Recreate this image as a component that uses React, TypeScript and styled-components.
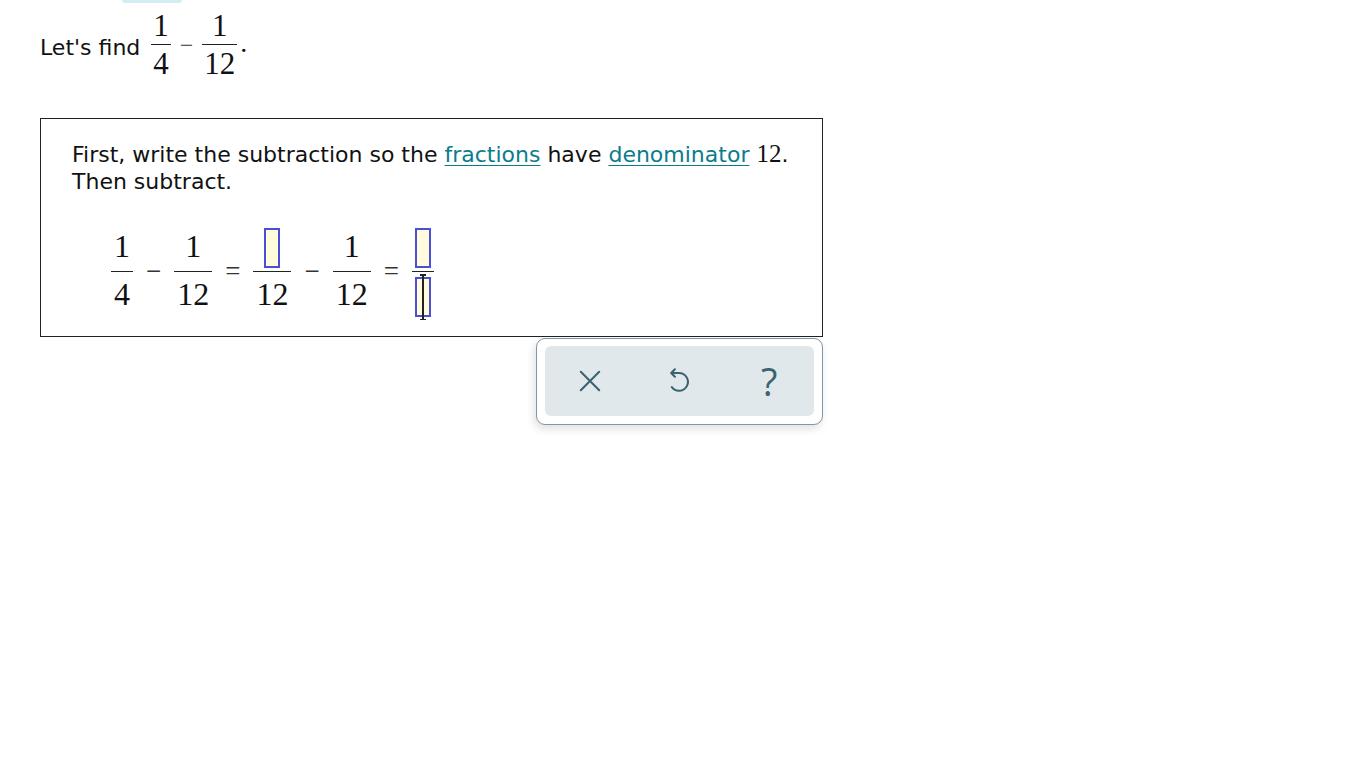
import React from "react";
import styled, { createGlobalStyle } from "styled-components";

const GlobalStyle = createGlobalStyle`
  html, body {
    margin: 0;
    padding: 0;
    background: #fff;
  }
  body {
    font-family: "DejaVu Sans", Verdana, sans-serif;
    color: #111;
  }
`;

type Size = "sm" | "lg";

const Frac: React.FC<{ num: React.ReactNode; den: React.ReactNode; size?: Size }> = ({
  num,
  den,
  size = "lg",
}) => (
  <FracWrap size={size}>
    <Numer size={size}>{typeof num === "string" ? <Digit size={size} pos="num">{num}</Digit> : num}</Numer>
    <FracBar size={size} />
    <Denom size={size}>{typeof den === "string" ? <Digit size={size} pos="den">{den}</Digit> : den}</Denom>
  </FracWrap>
);

const App: React.FC = () => {
  return (
    <>
      <GlobalStyle />
      <Page>
        <TopTab />
        <Prompt>
          <PromptText>Let's find</PromptText>
          <Frac size="sm" num="1" den="4" />
          <Op size="sm">−</Op>
          <Frac size="sm" num="1" den="12" />
          <Dot>.</Dot>
        </Prompt>

        <Card>
          <Instructions>
            First, write the subtraction so the <Link>fractions</Link> have{" "}
            <Link>denominator</Link> <SerifNum>12</SerifNum>.
            <br />
            Then subtract.
          </Instructions>
          <Equation>
            <Frac num="1" den="4" />
            <Op>−</Op>
            <Frac num="1" den="12" />
            <Op>=</Op>
            <Frac num={<Blank />} den="12" />
            <Op>−</Op>
            <Frac num="1" den="12" />
            <Op>=</Op>
            <Frac
              num={<Blank />}
              den={
                <CursorSlot>
                  <Blank />
                  <Caret />
                </CursorSlot>
              }
            />
          </Equation>
        </Card>

        <ToolRow>
          <Toolbar>
            <ToolInner>
              <ToolButton aria-label="clear">
                <svg width="26" height="26" viewBox="0 0 24 24" fill="none">
                  <path d="M3.5 3.5 L20.5 20.5 M20.5 3.5 L3.5 20.5" stroke="currentColor" strokeWidth="1.9" strokeLinecap="round" />
                </svg>
              </ToolButton>
              <ToolButton aria-label="undo">
                <svg width="26" height="26" viewBox="0 0 24 24" fill="none">
                  <path
                    d="M8.2 1.2 L4.8 4.6 L8.2 8 M4.8 4.6 H12 A8.2 8.2 0 1 1 5.4 17.6"
                    stroke="currentColor"
                    strokeWidth="1.9"
                    strokeLinecap="round"
                    strokeLinejoin="round"
                  />
                </svg>
              </ToolButton>
              <ToolButton aria-label="help">
                <Question>?</Question>
              </ToolButton>
            </ToolInner>
          </Toolbar>
        </ToolRow>
      </Page>
    </>
  );
};

const Page = styled.div`
  width: 1366px;
  min-height: 768px;
  padding: 0 0 0 40px;
  box-sizing: border-box;
  display: flex;
  flex-direction: column;
`;

const TopTab = styled.div`
  width: 60px;
  height: 3px;
  margin-left: 82px;
  background: #d4edf2;
  border-radius: 0 0 6px 6px;
`;

const Prompt = styled.div`
  display: flex;
  align-items: center;
  margin-top: 7px;
`;

const PromptText = styled.span`
  font-size: 22px;
  margin-right: 11px;
  margin-top: 6px;
`;

const Dot = styled.span`
  font-family: "Liberation Serif", "Times New Roman", serif;
  font-size: 28px;
  line-height: 1;
  margin: -4px 0 0 3px;
`;

const FracWrap = styled.span<{ size: Size }>`
  display: inline-flex;
  flex-direction: column;
  align-items: center;
  font-family: "Liberation Serif", "Times New Roman", serif;
  font-size: ${(p) => (p.size === "sm" ? "31px" : "32px")};
  line-height: 1;
`;

const Numer = styled.span<{ size: Size }>`
  display: flex;
  justify-content: center;
  align-items: flex-end;
  padding: 0 ${(p) => (p.size === "sm" ? "2px" : "3px")};
  height: ${(p) => (p.size === "sm" ? "31px" : "40px")};
`;

const Denom = styled.span<{ size: Size }>`
  display: flex;
  justify-content: center;
  align-items: flex-start;
  padding: 0 ${(p) => (p.size === "sm" ? "2px" : "3px")};
  height: ${(p) => (p.size === "sm" ? "31px" : "43px")};
`;

const Digit = styled.span<{ size: Size; pos: "num" | "den" }>`
  display: block;
  margin: ${(p) =>
    p.size === "sm" ? "0" : p.pos === "num" ? "0 0 6px" : "3px 0 0"};
`;

const FracBar = styled.span<{ size: Size }>`
  align-self: stretch;
  height: 0;
  border-top: 1.5px solid #222;
  margin: 3px 0;
`;

const Op = styled.span<{ size?: Size }>`
  font-family: "Liberation Serif", "Times New Roman", serif;
  font-size: ${(p) => (p.size === "sm" ? "24px" : "27px")};
  margin: ${(p) => (p.size === "sm" ? "1px 9px 0" : "0 13px 4px")};
  color: #333;
  line-height: 1;
`;

const Card = styled.div`
  margin-top: 39px;
  width: 783px;
  height: 219px;
  box-sizing: border-box;
  border: 1.5px solid #222;
  padding: 21px 0 0 31px;
`;

const Instructions = styled.div`
  font-size: 22px;
  line-height: 27px;
  color: #111;
`;

const Link = styled.span`
  color: #0b7c8c;
  text-decoration: underline;
  text-underline-offset: 3px;
  text-decoration-thickness: 1px;
  cursor: pointer;
`;

const SerifNum = styled.span`
  font-family: "Liberation Serif", "Times New Roman", serif;
  font-size: 25px;
`;

const Equation = styled.div`
  display: flex;
  align-items: center;
  margin: 33px 0 0 39px;
`;

const Blank = styled.span`
  display: block;
  width: 12px;
  height: 36px;
  border: 2px solid #4a4fd6;
  background: #fffbdc;
`;

const CursorSlot = styled.span`
  position: relative;
  display: block;
  margin-top: 2px;
`;

const Caret = styled.span`
  position: absolute;
  left: 50%;
  top: -3px;
  bottom: -3px;
  width: 1.5px;
  margin-left: -0.75px;
  background: #222;
  &::before,
  &::after {
    content: "";
    position: absolute;
    left: -2.5px;
    width: 6px;
    height: 1.5px;
    background: #222;
  }
  &::before {
    top: 0;
  }
  &::after {
    bottom: 0;
  }
`;

const ToolRow = styled.div`
  width: 783px;
  display: flex;
  justify-content: flex-end;
  margin-top: 1px;
`;

const Toolbar = styled.div`
  width: 287px;
  height: 87px;
  box-sizing: border-box;
  background: #fff;
  border: 1px solid #7f97a2;
  border-radius: 9px;
  padding: 7px 8px 8px;
  box-shadow: -2px 4px 8px rgba(0, 0, 0, 0.12);
`;

const ToolInner = styled.div`
  height: 100%;
  background: #e1e8eb;
  border-radius: 6px;
  display: grid;
  grid-template-columns: repeat(3, 1fr);
  align-items: center;
  justify-items: center;
`;

const ToolButton = styled.button`
  border: none;
  background: transparent;
  color: #3a6370;
  padding: 0;
  width: 44px;
  height: 44px;
  display: flex;
  align-items: center;
  justify-content: center;
  cursor: pointer;
`;

const Question = styled.span`
  font-family: "Open Sans", "DejaVu Sans", sans-serif;
  font-weight: 400;
  font-size: 38px;
  line-height: 1;
  color: #3a6370;
`;

export default App;
